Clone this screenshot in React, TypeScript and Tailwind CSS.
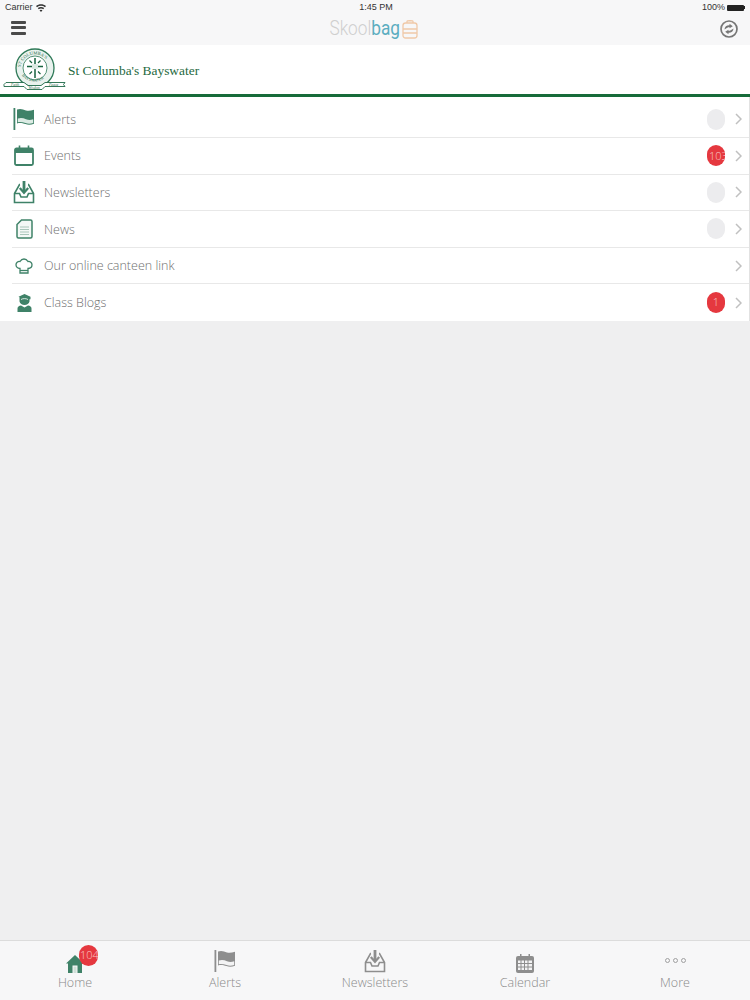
import React from "react";

const green = "#3f8268";

const FlagIcon = ({ color, fold, className }: { color: string; fold: string; className: string }) => (
  <svg viewBox="0 0 22 24" className={className}>
    <rect x="0.500" y="1" width="1.800" height="22" fill={color} />
    <path d="M4 2.500c4-1.500 6 .2 9 1 2.500.6 5 .2 8-.8v14c-3 1.200-6 1.200-8.500.4-3-1-5.500-1.700-8.500-.7z" fill={color} />
    <path d="M4.800 11.500c3-1 5.500-.5 8.200 .7 2.500 1 4.500 1 7.200 .1v3.700c-2.700 .9-5.200 .9-7.700 .1-2.700-.9-5-1.500-7.700-.9z" fill={fold} />
  </svg>
);

const InboxIcon = ({ color, className }: { color: string; className: string }) => (
  <svg viewBox="0 0 22 24" className={className} fill="none" stroke={color} strokeWidth="1.600">
    <path d="M7 4.500H6.500L1.500 13.500V22.500H20.500V13.500L15.500 4.500H15" />
    <path d="M1.500 13.500H6.500L8 17H14L15.500 13.500H20.500" />
    <path d="M11 1V11" strokeWidth="2.800" />
    <path d="M6.800 8L11 12.800L15.200 8" strokeWidth="2.200" />
  </svg>
);

const EventsIcon = () => (
  <svg viewBox="0 0 20 21" className="h-[21px] w-5" fill="none" stroke={green}>
    <rect x="1" y="3.500" width="18" height="16.500" rx="1.500" strokeWidth="1.800" />
    <path d="M1 6H19" strokeWidth="4" />
    <path d="M5.500 0.500V5M14.500 0.500V5" strokeWidth="1.600" />
  </svg>
);

const NewsIcon = () => (
  <svg viewBox="0 0 17 20" className="h-5 w-[17px]" fill="none" stroke={green}>
    <path d="M5.500 1H14.500A1.500 1.500 0 0 1 16 2.500V17.500A1.500 1.500 0 0 1 14.500 19H2.500A1.500 1.500 0 0 1 1 17.500V5.500z" strokeWidth="1.500" fill="#f4f8f6" />
    <path d="M4 8H13M4 10.500H13M4 13H13M4 15.500H13" stroke="#a9c6ba" strokeWidth="1.200" />
  </svg>
);

const ChefIcon = () => (
  <svg viewBox="0 0 18 16" className="h-4 w-[18px]" fill="none" stroke={green} strokeWidth="1.300">
    <path d="M5 10.500C2.500 10.500 1 8.800 1 6.800 1 4.700 2.800 3.200 5 3.500 6 1.800 7.500 1 9 1s3 .8 4 2.500c2.200-.3 4 1.200 4 3.300 0 2-1.500 3.700-4 3.700V15H5z" />
    <path d="M5 12.500H13" />
  </svg>
);

const GradIcon = () => (
  <svg viewBox="0 0 15 18" className="h-[18px] w-[15px]" fill={green}>
    <path d="M7.500 0L13.500 2.800V5.200H12.500V7.500C12 9.800 10 11 7.500 11S3 9.800 2.500 7.500V3.200L1.500 2.800z" />
    <path d="M4 5.500C6 4.300 9 4.300 11 5.500" stroke="#fff" strokeWidth="0.800" fill="none" />
    <path d="M0.500 18V14.500C0.500 12.800 2 11.800 4 11.500L7.500 13.500L11 11.500C13 11.800 14.500 12.800 14.500 14.500V18z" />
  </svg>
);

const HomeIcon = () => (
  <svg viewBox="0 0 18 18" className="h-[18px] w-[18px]" fill={green}>
    <path d="M9 0L18 8.500H16V18H11.500V10.500H6.500V18H2V8.500H0z" />
    <path d="M7.500 11.500H10.500V18H7.500z" fill="#cfe0d8" />
  </svg>
);

const CalendarIcon = () => (
  <svg viewBox="0 0 18 19" className="h-[19px] w-[18px]" fill="#8e8e8e">
    <path d="M0 4a2 2 0 0 1 2-2h14a2 2 0 0 1 2 2v13a2 2 0 0 1-2 2H2a2 2 0 0 1-2-2z" />
    <path d="M4 0h1.500v3H4zM12.500 0H14v3h-1.500z" />
    <path
      d="M2 6.500h2.500v2.500H2zM5.500 6.500H8v2.500H5.500zM9 6.500h2.500v2.500H9zM12.500 6.500H16v2.500h-3.500zM2 10h2.500v2.500H2zM5.500 10H8v2.500H5.500zM9 10h2.500v2.500H9zM12.500 10H16v2.500h-3.500zM2 13.500h2.500V16H2zM5.500 13.500H8V16H5.500zM9 13.500h2.500V16H9zM12.500 13.500H16V16h-3.500z"
      fill="#f3f3f4"
    />
  </svg>
);

const SchoolCrest = () => (
  <svg viewBox="0 0 64 44" className="h-[44px] w-[64px]">
    <defs>
      <path id="crest-top" d="M17.500 21a14.500 14.500 0 0 1 29 0" />
      <path id="crest-bottom" d="M16.500 22a15.500 15.500 0 0 0 30 0" />
    </defs>
    <circle cx="32" cy="20" r="19" fill="#e9f2ee" stroke="#2f7a58" strokeWidth="1.300" />
    <circle cx="32" cy="20" r="12" fill="#fff" stroke="#2f7a58" strokeWidth="0.800" />
    <text fontSize="4.600" fill="#1f6a48" fontFamily="'Liberation Serif', serif">
      <textPath href="#crest-top" startOffset="4%">ST COLUMBA'S</textPath>
    </text>
    <text fontSize="4.200" fill="#1f6a48" fontFamily="'Liberation Serif', serif">
      <textPath href="#crest-bottom" startOffset="14%">BAYSWATER</textPath>
    </text>
    <path d="M32 10V30M24 18.500H40" stroke="#17633f" strokeWidth="1.500" />
    <path d="M26.500 12.500l2.500 2.500M37.500 12.500l-2.500 2.500M26.500 26l2.500-2.500M37.500 26l-2.500-2.500" stroke="#17633f" strokeWidth="1.200" />
    <rect x="29" y="16" width="6" height="5" fill="#dbe9e2" />
    <path d="M1 36.500L3 34.500H21L25 37.500H38L42 34.500H62L60.500 36.500L62 38.500H42L39 41.500H24L21 38.500H1z" fill="#fff" stroke="#1f6a48" strokeWidth="0.900" />
    <text x="8" y="37.800" fontSize="3.800" fontStyle="italic" fill="#1f6a48" fontFamily="'Liberation Serif', serif">Faith</text>
    <text x="25.500" y="40.500" fontSize="3.600" fontStyle="italic" fill="#1f6a48" fontFamily="'Liberation Serif', serif">Wisdom</text>
    <text x="46" y="37.800" fontSize="3.800" fontStyle="italic" fill="#1f6a48" fontFamily="'Liberation Serif', serif">Peace</text>
  </svg>
);

const rows = [
  { label: "Alerts", icon: <FlagIcon color={green} fold="#dcebe4" className="h-6 w-[22px]" />, badge: "" },
  { label: "Events", icon: <EventsIcon />, badge: "103" },
  { label: "Newsletters", icon: <InboxIcon color={green} className="h-6 w-[22px]" />, badge: "" },
  { label: "News", icon: <NewsIcon />, badge: "" },
  { label: "Our online canteen link", icon: <ChefIcon />, badge: null },
  { label: "Class Blogs", icon: <GradIcon />, badge: "1" },
];

const tabs = [
  { label: "Home", icon: <HomeIcon /> },
  { label: "Alerts", icon: <FlagIcon color="#8e8e8e" fold="#f3f3f4" className="h-6 w-[22px]" /> },
  { label: "Newsletters", icon: <InboxIcon color="#8e8e8e" className="h-6 w-[22px]" /> },
  { label: "Calendar", icon: <CalendarIcon /> },
  {
    label: "More",
    icon: (
      <div className="mb-[10px] flex gap-[3px]">
        <span className="h-[5px] w-[5px] rounded-full border border-[#a0a0a0]" />
        <span className="h-[5px] w-[5px] rounded-full border border-[#a0a0a0]" />
        <span className="h-[5px] w-[5px] rounded-full border border-[#a0a0a0]" />
      </div>
    ),
  },
];

export default function App() {
  return (
    <div className="flex h-[1000px] w-[750px] flex-col overflow-hidden bg-[#efeff0] font-['Open_Sans',sans-serif]">
      {/* status + nav bar */}
      <div className="h-[45px] shrink-0 bg-[#f7f7f8]">
        <div className="grid h-[15px] grid-cols-3 items-center px-[5px] font-['Liberation_Sans',sans-serif] text-[9px] text-[#333]">
          <div className="flex items-center gap-[3px]">
            <span>Carrier</span>
            <svg viewBox="0 0 10 8" className="h-2 w-[10px]" fill="#333">
              <path d="M5 8L3.500 6.200C4.400 5.500 5.600 5.500 6.500 6.200zM2.700 5.200L1.800 4.100C3.700 2.600 6.300 2.600 8.200 4.100L7.300 5.200C5.900 4.200 4.100 4.200 2.700 5.200zM1 3.200L0 2.100C2.900-.4 7.100-.4 10 2.100L9 3.200C6.600 1.300 3.400 1.300 1 3.200z" />
            </svg>
          </div>
          <div className="pl-[2px] text-center">1:45 PM</div>
          <div className="flex items-center justify-end gap-[2px]">
            <span>100%</span>
            <div className="h-[6px] w-[17px] rounded-[1px] bg-[#222]" />
            <div className="-ml-[2px] h-[3px] w-px bg-[#222]" />
          </div>
        </div>
        <div className="flex h-[25px] items-center justify-between pl-[11px] pr-[12px]">
          <div className="flex w-[15px] flex-col gap-[2.500px]">
            <div className="h-[3px] rounded-[1px] bg-[#4a4a4a]" />
            <div className="h-[3px] rounded-[1px] bg-[#4a4a4a]" />
            <div className="h-[3px] rounded-[1px] bg-[#4a4a4a]" />
          </div>
          <div className="flex items-center pt-[2px] font-['Roboto',sans-serif] text-[21px] leading-none">
            <div className="flex w-[71px] origin-right scale-x-[0.82] justify-end whitespace-nowrap font-light">
              <span className="text-[#cfcfcf]">Skool</span>
              <span className="font-normal text-[#5badc0]">bag</span>
            </div>
            <svg viewBox="0 0 16 20" className="ml-[2px] h-5 w-4" fill="none" stroke="#f0c9a8" strokeWidth="1.300">
              <rect x="1" y="4" width="14" height="15" rx="2.500" />
              <path d="M1 10H15M1 14H15M5 4V2.500C5 1.500 11 1.500 11 2.500V4" />
            </svg>
          </div>
          <svg viewBox="0 0 18 18" className="mt-[2px] h-[18px] w-[18px]" fill="none">
            <circle cx="9" cy="9" r="8" stroke="#757575" strokeWidth="1.700" />
            <path d="M4.500 9.500C4.500 6.500 7 5 9.500 5.200L9.500 3.800L12.800 6.200L9.500 8.300V7C8 7 6.800 8 4.500 9.500z" fill="#757575" />
            <path d="M13.500 8.500C13.500 11.500 11 13 8.500 12.800L8.500 14.200L5.200 11.800L8.500 9.700V11C10 11 11.200 10 13.500 8.500z" fill="#757575" />
          </svg>
        </div>
      </div>

      {/* school banner */}
      <div className="flex h-[52px] shrink-0 items-center gap-px border-b-[3px] border-[#176b3a] bg-white pl-[3px]">
        <SchoolCrest />
        <span className="pt-[3px] font-['Liberation_Serif',serif] text-[13.400px] text-[#1f6a42]">St Columba's Bayswater</span>
      </div>

      {/* menu list */}
      <div className="h-[223.500px] shrink-0 overflow-hidden border-r border-[#e2e2e2] bg-white pt-[4.400px]">
        {rows.map((row, i) => (
          <div key={row.label} className="pl-3">
            <div className={`flex h-[36.600px] items-center pr-[7px] ${i < rows.length - 1 ? "border-b border-[#e8e8e8]" : ""}`}>
              <div className="flex w-6 justify-center">{row.icon}</div>
              <span className="ml-2 flex-1 pt-[2px] text-[12.500px] font-light text-[#6f6f6f]">{row.label}</span>
              {row.badge !== null && (
                <div
                  className={`ml-px flex h-[21px] w-[18px] items-center overflow-hidden rounded-full text-[11px] font-light text-[#f8c8c8] ${
                    row.badge === "1" ? "justify-center" : "justify-start pl-[2px]"
                  } ${row.badge ? "bg-[#e5383f]" : "bg-[#ececee]"}`}
                >
                  {row.badge}
                </div>
              )}
              <svg viewBox="0 0 7 12" className="ml-[10px] h-3 w-[7px]" fill="none" stroke="#c0c0c0" strokeWidth="1.500">
                <path d="M1 1L6 6L1 11" />
              </svg>
            </div>
          </div>
        ))}
      </div>

      <div className="flex-1" />

      {/* tab bar */}
      <div className="grid h-[60px] shrink-0 grid-cols-5 border-t border-[#dcdcdc] bg-[#f7f7f8]">
        {tabs.map((tab) => (
          <div key={tab.label} className="flex flex-col items-center">
            <div className="relative flex h-[32px] items-end justify-center">
              {tab.icon}
              {tab.label === "Home" && (
                <div className="absolute left-[13px] top-[4px] flex h-[21px] w-[19px] items-center justify-start overflow-hidden rounded-full bg-[#e5383f] pl-px text-[11px] font-light text-[#f8c8c8]">
                  104
                </div>
              )}
            </div>
            <span className="mt-px text-[12.500px] font-light leading-[18px] text-[#8a8a8a]">{tab.label}</span>
          </div>
        ))}
      </div>
    </div>
  );
}
